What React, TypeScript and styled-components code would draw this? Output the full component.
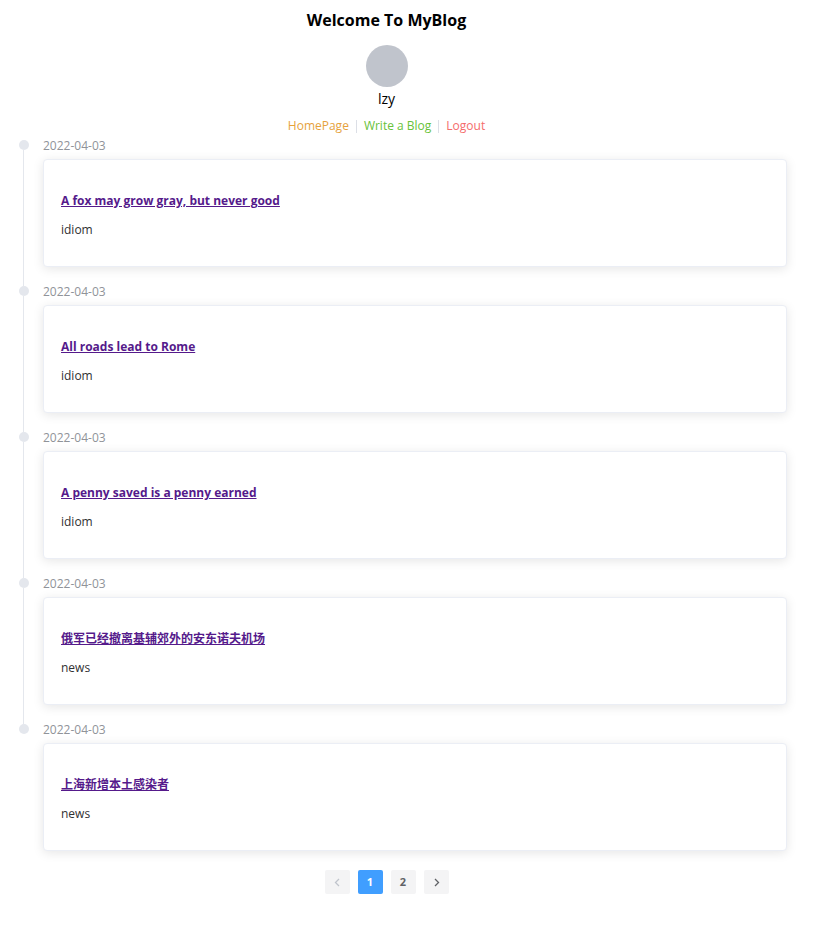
import React from 'react';
import styled, { createGlobalStyle } from 'styled-components';

const GlobalStyle = createGlobalStyle`
  *, *::before, *::after { box-sizing: border-box; }
  body {
    margin: 0;
    background: #fff;
    color: #000;
    font-family: "Open Sans", "Noto Sans CJK SC", sans-serif;
    font-size: 12px;
    line-height: 20px;
  }
`;

const Page = styled.div`
  padding: 8px 40px 40px 19px;
`;

const Header = styled.header`
  display: flex;
  flex-direction: column;
  align-items: center;
  margin: 0 14px 4px -19px;
`;

const SiteTitle = styled.h1`
  margin: 0 0 13px;
  font-size: 16px;
  line-height: 24px;
  font-weight: 700;
`;

const Avatar = styled.div`
  width: 42px;
  height: 42px;
  border-radius: 50%;
  background: #c0c4cc;
`;

const UserName = styled.div`
  margin: 2px 0 7px;
  font-size: 14px;
`;

const Nav = styled.nav`
  display: flex;
  align-items: center;
`;

const NavLink = styled.a<{ $color: string }>`
  color: ${(p) => p.$color};
  text-decoration: none;
`;

const Divider = styled.span`
  width: 1px;
  height: 13px;
  margin: 0 7px;
  background: #dcdfe6;
`;

const Timeline = styled.ol`
  margin: 0;
  padding: 0;
  list-style: none;
`;

const Item = styled.li`
  display: grid;
  grid-template-columns: 10px 1fr;
  column-gap: 14px;

  &:last-child { --line: transparent; }
`;

const Rail = styled.div`
  display: flex;
  flex-direction: column;

  &::before {
    content: "";
    width: 10px;
    height: 10px;
    flex: none;
    border-radius: 50%;
    background: #e4e7ed;
  }

  &::after {
    content: "";
    width: 1px;
    flex: 1;
    margin-left: 4px;
    background: var(--line, #e4e7ed);
  }
`;

const Entry = styled.article`
  padding-bottom: 19px;
`;

const Timestamp = styled.time`
  display: block;
  margin-bottom: 7px;
  color: #909399;
  line-height: 12px;
`;

const Card = styled.div`
  padding: 31px 17px 26px;
  border: 1px solid #ebeef5;
  border-radius: 4px;
  background: #fff;
  box-shadow: 0 2px 11px rgba(0, 0, 0, 0.1);
`;

const PostTitle = styled.h2`
  margin: 0 0 9px;
  font-size: 12px;
  line-height: 20px;
  font-weight: 700;

  a { color: #551a8b; }
`;

const Summary = styled.p`
  margin: 0;
  color: #303133;
`;

const Pagination = styled.nav`
  display: flex;
  justify-content: center;
  gap: 8px;
  margin: 0 14px 0 -19px;
`;

const PageButton = styled.button<{ $active?: boolean }>`
  display: flex;
  align-items: center;
  justify-content: center;
  width: 25px;
  height: 24px;
  padding: 0;
  border: 0;
  border-radius: 2px;
  background: ${(p) => (p.$active ? '#409eff' : '#f4f4f5')};
  color: ${(p) => (p.$active ? '#fff' : '#606266')};
  font: inherit;
  font-size: 11px;
  font-weight: 700;
  cursor: pointer;

  &:disabled { color: #c0c4cc; cursor: not-allowed; }
`;

const Chevron = ({ d }: { d: string }) => (
  <svg width="11" height="11" viewBox="0 0 11 11" fill="none" stroke="currentColor" strokeWidth="1.3" aria-hidden="true">
    <path d={d} />
  </svg>
);

const posts = [
  { title: 'A fox may grow gray, but never good', summary: 'idiom' },
  { title: 'All roads lead to Rome', summary: 'idiom' },
  { title: 'A penny saved is a penny earned', summary: 'idiom' },
  { title: '俄军已经撤离基辅郊外的安东诺夫机场', summary: 'news' },
  { title: '上海新增本土感染者', summary: 'news' },
];

export default function App() {
  return (
    <>
      <GlobalStyle />
      <Page>
        <Header>
          <SiteTitle>Welcome To MyBlog</SiteTitle>
          <Avatar />
          <UserName>lzy</UserName>
          <Nav aria-label="Main">
            <NavLink href="#home" $color="#e6a23c">HomePage</NavLink>
            <Divider />
            <NavLink href="#write" $color="#67c23a">Write a Blog</NavLink>
            <Divider />
            <NavLink href="#logout" $color="#f56c6c">Logout</NavLink>
          </Nav>
        </Header>
        <Timeline>
          {posts.map((post) => (
            <Item key={post.title}>
              <Rail />
              <Entry>
                <Timestamp dateTime="2022-04-03">2022-04-03</Timestamp>
                <Card>
                  <PostTitle><a href="#post">{post.title}</a></PostTitle>
                  <Summary>{post.summary}</Summary>
                </Card>
              </Entry>
            </Item>
          ))}
        </Timeline>
        <Pagination aria-label="Pages">
          <PageButton disabled aria-label="Previous page"><Chevron d="M7 2 3.5 5.5 7 9" /></PageButton>
          <PageButton $active aria-current="page">1</PageButton>
          <PageButton>2</PageButton>
          <PageButton aria-label="Next page"><Chevron d="M4 2 7.5 5.5 4 9" /></PageButton>
        </Pagination>
      </Page>
    </>
  );
}
